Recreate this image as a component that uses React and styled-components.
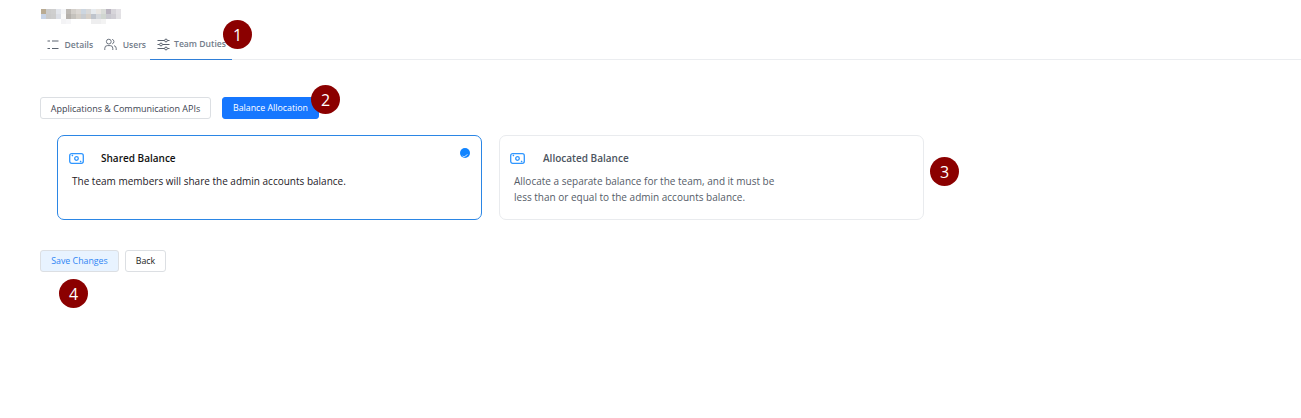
import React from 'react';
import styled, { createGlobalStyle } from 'styled-components';

const GlobalStyle = createGlobalStyle`
  html, body {
    margin: 0;
    background: #fff;
    font-family: "Open Sans", "Noto Sans", sans-serif;
  }
`;

const Page = styled.div`
  width: 1301px;
  height: 418px;
  box-sizing: border-box;
  padding: 9px 0 0 41px;
  overflow: hidden;
`;

const BlurredName = styled.div`
  display: grid;
  grid-template-columns: repeat(16, 5px);
  grid-auto-rows: 5px;
  margin-bottom: 2px;
`;

const BlurCell = styled.span`
  background: ${({ $color }) => $color};
`;

const Content = styled.div`
  margin-left: -1px;
`;

const Tabs = styled.div`
  display: flex;
  height: 33px;
  border-bottom: 1px solid #ebedf0;
  box-sizing: content-box;
`;

const Tab = styled.div`
  position: relative;
  display: flex;
  align-items: center;
  gap: ${({ $gap }) => $gap};
  height: 34px;
  box-sizing: border-box;
  padding: 3px ${({ $right }) => $right} 0 ${({ $left }) => $left};
  font-size: 8.6px;
  font-weight: 600;
  color: #727c8a;
  border-bottom: ${({ $active }) => ($active ? '1px solid #2f7fd8' : 'none')};
  svg { flex: none; color: #5c6470; }
`;

const Badge = styled.div`
  position: absolute;
  width: 29px;
  height: 29px;
  border-radius: 50%;
  background: #8b0000;
  color: #fff;
  font-size: 16px;
  font-weight: 400;
  display: flex;
  align-items: center;
  justify-content: center;
  z-index: 2;
  top: ${({ $top }) => $top};
  left: ${({ $left }) => $left};
`;

const ButtonRow = styled.div`
  position: relative;
  display: flex;
  gap: 11px;
  margin-top: 37px;
`;

const PillButton = styled.div`
  height: 22px;
  box-sizing: border-box;
  display: flex;
  align-items: center;
  justify-content: center;
  width: ${({ $w }) => $w};
  border-radius: 3px;
  font-size: ${({ $primary }) => ($primary ? '8.8px' : '9px')};
  font-weight: ${({ $primary }) => ($primary ? 500 : 400)};
  background: ${({ $primary }) => ($primary ? '#1677ff' : '#fff')};
  color: ${({ $primary }) => ($primary ? '#fff' : '#3d4450')};
  border: 1px solid ${({ $primary }) => ($primary ? '#1677ff' : '#dcdfe3')};
`;

const Cards = styled.div`
  display: flex;
  gap: 17px;
  margin: 16px 0 0 17px;
`;

const Card = styled.div`
  position: relative;
  width: 425px;
  height: 85px;
  box-sizing: border-box;
  border-radius: 7px;
  border: 1px solid ${({ $selected }) => ($selected ? '#2b86e5' : '#e9ebee')};
  padding: 14px 14px 0 ${({ $selected }) => ($selected ? '11px' : '10px')};
`;

const CardHead = styled.div`
  display: flex;
  align-items: center;
  height: 16px;
  gap: ${({ $gap }) => $gap};
  svg { flex: none; color: #2f96ff; }
`;

const CardTitle = styled.div`
  font-size: 10px;
  font-weight: 600;
  color: ${({ $selected }) => ($selected ? '#111' : '#4c5460')};
`;

const CardText = styled.div`
  margin: 7px 0 0 ${({ $selected }) => ($selected ? '3px' : '4px')};
  width: 275px;
  font-size: 10px;
  line-height: 16px;
  color: ${({ $selected }) => ($selected ? '#1d2026' : '#555c68')};
`;

const Radio = styled.div`
  position: absolute;
  top: 12px;
  right: 11px;
  width: 10px;
  height: 10px;
  border-radius: 50%;
  background: #1184ff;
  overflow: hidden;
  svg { display: block; }
`;

const Actions = styled.div`
  position: relative;
  display: flex;
  gap: 6px;
  margin-top: 30px;
`;

const ActionButton = styled.div`
  height: 22px;
  box-sizing: border-box;
  width: ${({ $w }) => $w};
  padding-bottom: 1px;
  display: flex;
  align-items: center;
  justify-content: center;
  border-radius: 3px;
  font-size: 8.8px;
  border: 1px solid #dcdfe3;
  background: ${({ $soft }) => ($soft ? '#e8f3ff' : '#fff')};
  color: ${({ $soft }) => ($soft ? '#2f86f5' : '#1b1e24')};
`;

const CardRow = styled.div`
  position: relative;
`;

const blur = [
  '#b9ab93', '#cccccc', '#cfcfcf', '#e3e6ec', '#f4f5f7', '#bdb9b4', '#d3cfca', '#dcd8d4',
  '#cdd6e0', '#d9d9d9', '#e6eaee', '#e9e6e2', '#d9dcd8', '#b9b3bf', '#d7d5da', '#e4e2e6',
  '#c7d3e6', '#cacaca', '#cdcdcd', '#dcdfe6', '#fafafa', '#b5b1ac', '#c5c2bd', '#d4cfc8',
  '#c9ccd0', '#d7d0c8', '#bfc4cc', '#d5d8dc', '#d0d6d0', '#c9c9d0', '#d0ced4', '#e2e1e4',
  '#ffffff', '#ffffff', '#ffffff', '#ffffff', '#f3f3f5', '#f6f6f8', '#ffffff', '#ffffff',
  '#ffffff', '#ffffff', '#eeeeef', '#eeeeef', '#f3f3f3', '#ffffff', '#ffffff', '#ffffff',
];

const MoneyIcon = () => (
  <svg width="15" height="11" viewBox="0 0 15 11" fill="none" stroke="currentColor" strokeWidth="1.3">
    <rect x="0.7" y="0.7" width="13.6" height="9.6" rx="2" />
    <circle cx="7.5" cy="5.5" r="1.8" />
    <path d="M2.8 2.9l1.2-.8M12.2 8.1l-1.2.8" />
  </svg>
);

const ListIcon = () => (
  <svg width="12" height="12" viewBox="0 0 12 12" fill="none" stroke="currentColor" strokeWidth="1">
    <path d="M0.5 2h2.5M5 2h6.5M0.5 9.5h2.5M5 9.5h6.5" />
  </svg>
);

const UsersIcon = () => (
  <svg width="13" height="13" viewBox="0 0 13 13" fill="none" stroke="currentColor" strokeWidth="0.9">
    <circle cx="4.8" cy="3.6" r="2.4" />
    <path d="M.8 12V10.2a2.6 2.6 0 0 1 2.6-2.6h2.8a2.6 2.6 0 0 1 2.6 2.6V12" />
    <path d="M8.2 1.3a2.4 2.4 0 0 1 0 4.6M10 7.7a2.6 2.6 0 0 1 2.2 2.5V12" />
  </svg>
);

const SlidersIcon = () => (
  <svg width="13" height="13" viewBox="0 0 13 13" fill="none" stroke="currentColor" strokeWidth="1">
    <path d="M.5 2.5h7M10.5 2.5h2M.5 6.5h2M5.5 6.5h7M.5 10.5h7M10.5 10.5h2" />
    <circle cx="9" cy="2.5" r="1.4" />
    <circle cx="4" cy="6.5" r="1.4" />
    <circle cx="9" cy="10.5" r="1.4" />
  </svg>
);

export default function App() {
  return (
    <Page>
      <GlobalStyle />
      <BlurredName>
        {blur.map((color, i) => (
          <BlurCell key={i} $color={color} />
        ))}
      </BlurredName>
      <Content>
        <Tabs>
          <Tab $left="7px" $right="5px" $gap="5.5px"><ListIcon />Details</Tab>
          <Tab $left="6px" $right="4px" $gap="5.5px"><UsersIcon />Users</Tab>
          <Tab $active $left="7px" $right="6px" $gap="4px">
            <SlidersIcon />Team Duties
            <Badge $top="-6px" $left="73px">1</Badge>
          </Tab>
        </Tabs>
        <ButtonRow>
          <PillButton $w="171px">Applications &amp; Communication APIs</PillButton>
          <PillButton $primary $w="97px">Balance Allocation</PillButton>
          <Badge $top="-12px" $left="271px">2</Badge>
        </ButtonRow>
        <CardRow>
          <Cards>
            <Card $selected>
              <CardHead $gap="17px"><MoneyIcon /><CardTitle $selected>Shared Balance</CardTitle></CardHead>
              <CardText $selected>The team members will share the admin accounts balance.</CardText>
              <Radio>
                <svg width="10" height="10" viewBox="0 0 10 10" fill="none" stroke="#d5e7ff" strokeWidth="0.9">
                  <path d="M2.5 8l1.5 1L7.5 6.5" />
                </svg>
              </Radio>
            </Card>
            <Card>
              <CardHead $gap="18px"><MoneyIcon /><CardTitle>Allocated Balance</CardTitle></CardHead>
              <CardText>Allocate a separate balance for the team, and it must be less than or equal to the admin accounts balance.</CardText>
            </Card>
          </Cards>
          <Badge $top="22px" $left="890px">3</Badge>
        </CardRow>
        <Actions>
          <ActionButton $soft $w="79px">Save Changes</ActionButton>
          <ActionButton $w="41px">Back</ActionButton>
          <Badge $top="29px" $left="19px">4</Badge>
        </Actions>
      </Content>
    </Page>
  );
}
